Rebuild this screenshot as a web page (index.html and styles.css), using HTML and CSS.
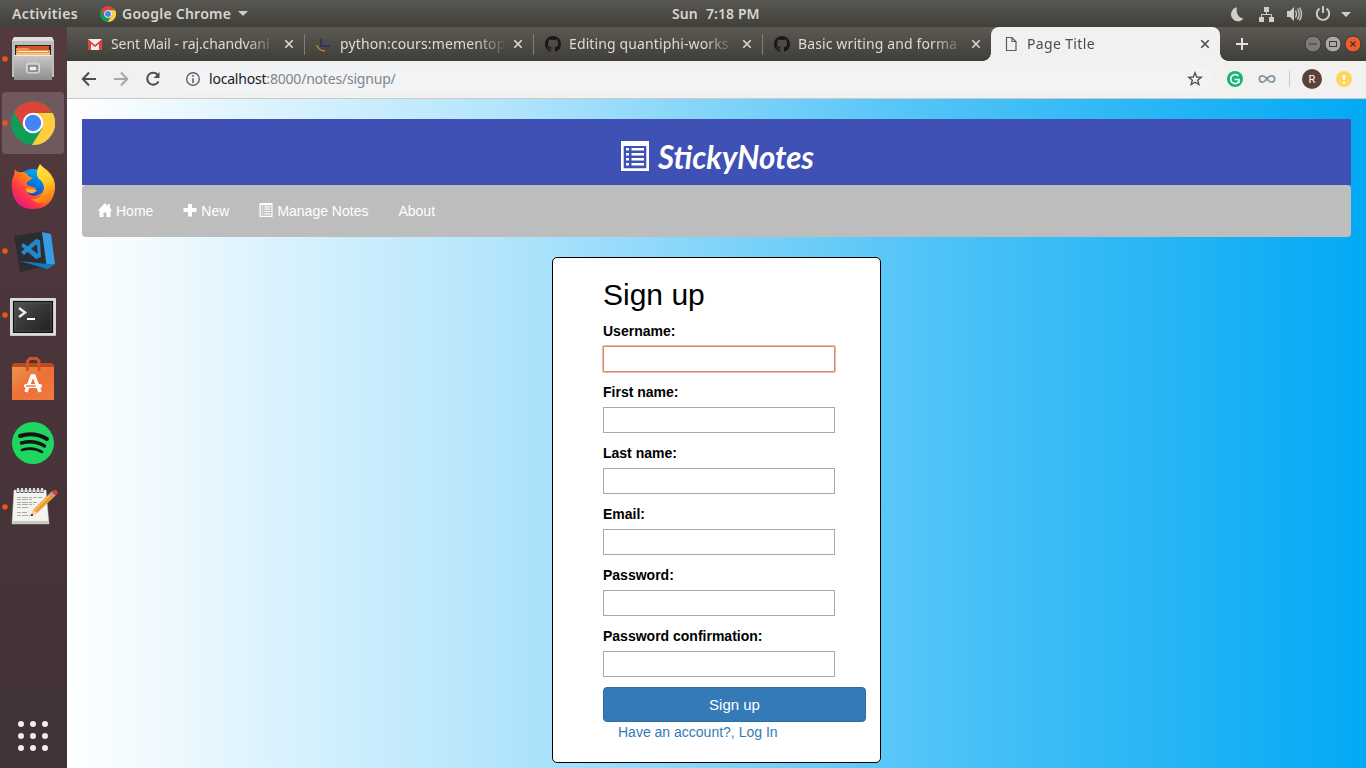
FILE: index.html
```html
<!DOCTYPE html>
<html lang="en">
<head>
<meta charset="utf-8">
<title>Page Title</title>
<link rel="stylesheet" href="styles.css">
</head>
<body>
<svg class="defs" aria-hidden="true">
  <defs>
    <symbol id="chrome" viewBox="0 0 44 44">
      <circle cx="22" cy="22" r="22" fill="#109d58"/>
      <path d="M22 22 12.5 27.5 3 11A22 22 0 0 1 41 11.5L22 12Z" fill="#db4437"/>
      <path d="M22 12H41.700A22 22 0 0 1 21 44L31.500 27Z" fill="#ffcd40"/>
      <circle cx="22" cy="22" r="10.300" fill="#fff"/><circle cx="22" cy="22" r="8.200" fill="#4285f4"/>
    </symbol>
    <symbol id="github" viewBox="0 0 16 16">
      <path fill="#1b1716" d="M8 0C3.580 0 0 3.580 0 8c0 3.540 2.290 6.530 5.470 7.590.4.070.55-.17.55-.38v-1.490c-2.010.37-2.530-.49-2.690-.94-.09-.23-.48-.94-.82-1.130-.28-.15-.68-.52-.01-.53.63-.01 1.080.58 1.230.82.72 1.210 1.870.87 2.330.66.07-.52.28-.87.51-1.070-1.780-.2-3.640-.89-3.640-3.950 0-.87.31-1.590.82-2.150-.08-.2-.36-1.020.08-2.120 0 0 .67-.21 2.200.82a7.500 7.500 0 0 1 4 0c1.530-1.040 2.200-.82 2.200-.82.44 1.100.16 1.920.08 2.120.51.56.82 1.270.82 2.150 0 3.070-1.870 3.750-3.650 3.950.29.25.54.73.54 1.480v2.200c0 .21.15.46.55.38A8 8 0 0 0 16 8c0-4.420-3.580-8-8-8Z"/>
    </symbol>
    <symbol id="close" viewBox="0 0 10 10"><path d="M1.300 1.300 8.700 8.700M8.700 1.300 1.300 8.700" stroke="currentColor" stroke-width="1.600" fill="none"/></symbol>
    <symbol id="list" viewBox="0 0 28 30">
      <path fill="currentColor" fill-rule="evenodd" d="M0 0H28V30H0ZM2.700 5V27.300H25.300V5Z"/>
      <path fill="currentColor" d="M5 7h3v2.500H5zM10.500 7H23v2.500H10.500zM5 12h3v2.500H5zM10.500 12H23v2.500H10.500zM5 17h3v2.500H5zM10.500 17H23v2.500H10.500zM5 22h3v2.500H5zM10.500 22H23v2.500H10.500z"/>
    </symbol>
    <linearGradient id="steel" x2="0" y2="1"><stop stop-color="#c9c9c9"/><stop offset="1" stop-color="#8f8f8f"/></linearGradient>
    <linearGradient id="bag" x2="1" y2="1"><stop stop-color="#e99548"/><stop offset=".5" stop-color="#ee6f35"/><stop offset="1" stop-color="#f27b45"/></linearGradient>
    <linearGradient id="fox" x1=".9" y1="0" x2=".1" y2=".9"><stop stop-color="#ffd52e"/><stop offset=".45" stop-color="#ff8a16"/><stop offset=".75" stop-color="#ff3647"/><stop offset="1" stop-color="#e31587"/></linearGradient>
    <linearGradient id="tail" x2=".3" y2="1"><stop stop-color="#fff14f"/><stop offset=".6" stop-color="#ffc928"/><stop offset="1" stop-color="#ff8012"/></linearGradient>
    <linearGradient id="globe" x1=".7" x2=".3" y2="1"><stop stop-color="#00b3f4"/><stop offset=".55" stop-color="#0867d8"/><stop offset="1" stop-color="#3a218c"/></linearGradient>
    <linearGradient id="glass" x2="1" y2="1"><stop stop-color="#555"/><stop offset=".5" stop-color="#363636"/><stop offset="1" stop-color="#202020"/></linearGradient>
  </defs>
</svg>

<header class="topbar">
  <div class="top-left">
    <span class="activities">Activities</span>
    <svg width="16" height="16"><use href="#chrome"/></svg>
    <span class="app-name">Google Chrome</span>
    <svg width="10" height="5" viewBox="0 0 10 5"><path d="M0 0H10L5 5Z" fill="#cfcdc9"/></svg>
  </div>
  <div class="clock"><span class="day">Sun</span><span>7:18 PM</span></div>
  <svg class="tray" width="124" height="26" viewBox="1230 0 124 26" fill="#d0cec9">
    <path d="M1237 6.300A7 7 0 1 0 1243.500 17.600C1238.500 17 1235.500 11.500 1237 6.300Z"/>
    <path d="M1264 6h5v5h-5zM1259 16h5v5h-5zM1269 16h5v5h-5z"/><path d="M1266.500 11v2.500M1261.500 16v-2.500h10V16" fill="none" stroke="#d0cec9"/>
    <path d="M1287 10h3l4-4v14l-4-4h-3z"/><path d="M1295.500 9.500q2 3.500 0 7M1297.500 7.500q3.500 5.500 0 11M1299.500 6.500q4 6.500 0 13" fill="none" stroke="#d0cec9" stroke-width="1.300"/>
    <path d="M1319.500 7.600A6.200 6.200 0 1 0 1326.500 7.600M1323 5v7" fill="none" stroke="#d0cec9" stroke-width="1.900"/>
    <path d="M1341 11h10l-5 5z"/>
  </svg>
</header>

<div class="desktop">
<nav class="dock">
  <svg class="app running" viewBox="0 0 67 64">
    <path d="M14 10H52L54 14V50H12V14Z" fill="#bdbdbd"/><path d="M14 10H52L54 14H12Z" fill="#dedede"/>
    <path d="M15 18H51V29H15Z" fill="#2b2522"/><path d="M17 19H49V28H17Z" fill="#cf5526"/><path d="M16 21H28L30 23H50V28H16Z" fill="#ee9249"/><path d="M18 24.500H48" stroke="#fff0d5"/><path d="M16 26H50V28H16Z" fill="#f6c275"/>
    <path d="M14 28H52V53H14Z" fill="url(#steel)"/><path d="M14 28.500H52" stroke="#e8e8e8"/>
    <rect x="26.500" y="36" width="13" height="10" rx="2" fill="#c5c5c5" stroke="#d8d8d8"/><rect x="29" y="39" width="8" height="5" fill="#eee" stroke="#555"/>
    <circle cx="5" cy="32" r="2.800" fill="#e95420"/>
  </svg>
  <svg class="app running" viewBox="0 0 67 64">
    <rect x="2" y="1" width="62" height="62" rx="4" fill="#70595c"/>
    <use href="#chrome" x="11" y="10" width="44" height="44"/>
    <circle cx="5" cy="32" r="2.800" fill="#e95420"/>
  </svg>
  <svg class="app" viewBox="0 0 67 64">
    <circle cx="33" cy="31" r="17" fill="url(#globe)"/>
    <path d="M15 14Q17 18 22 17Q27 17 28 21L33 23L27 27L27 30L36 33Q33 38 27 36Q30 43 38 40Q47 36 44 25Q38 18 40 10L47 15Q56 23 55 34Q52 54 33 54Q14 54 12 34Q11 25 14 20Z" fill="url(#fox)"/>
    <path d="M40 9Q35 17 38 23Q45 28 44 36Q40 46 31 44Q42 53 51 43Q59 30 48 17Q44 14 40 9Z" fill="url(#tail)"/>
    <path d="M26 33 37 35Q34 40 27 37Z" fill="#ffb32c"/>
  </svg>
  <svg class="app running" viewBox="0 0 67 64">
    <path d="M14 17 46 12 52 46 20 53Z" fill="#2d2d30"/>
    <path d="M42 13 51 15 55 45 47 50Z" fill="#369ce5"/><path d="M20 42 47 45 55 45 47 50Z" fill="#1279c4"/>
    <path d="M36 20 40 21 41 38 36 40 21 27 23 24 38 35ZM21 33 36 20 38 24 24 36Z" fill="#2188ce"/>
    <circle cx="5" cy="32" r="2.800" fill="#e95420"/>
  </svg>
  <svg class="app running" viewBox="0 0 67 64">
    <rect x="10" y="15" width="46" height="38" rx="1" fill="#c6c6c6"/><rect x="11" y="16" width="44" height="35" fill="none" stroke="#eee"/>
    <rect x="13.500" y="18.500" width="39" height="31" fill="url(#glass)" stroke="#111"/><path d="M15 20H51V48H15Z" fill="none" stroke="#555" stroke-width=".6"/>
    <path d="M19 25 25 29.500 19 34" fill="none" stroke="#e8e8e8" stroke-width="2.500"/><path d="M27 36H35" stroke="#fff" stroke-width="2"/>
    <circle cx="5" cy="32" r="2.800" fill="#e95420"/>
  </svg>
  <svg class="app" viewBox="0 0 67 64">
    <path d="M12 18 14 16H52L54 18V21H12Z" fill="#b84a1d"/><path d="M12 20H54V53H12Z" fill="url(#bag)"/>
    <path d="M27.500 24V14L30 11.500H36.500L39 14V24" fill="none" stroke="#cf5527" stroke-width="3"/>
    <path d="M26 45 32 29H34L40 45" fill="none" stroke="#fff" stroke-width="3.500"/><rect x="24" y="37" width="18" height="4" rx="2" fill="#fff"/><path d="M26 39H36" stroke="#ee7038" stroke-width="1.400"/>
  </svg>
  <svg class="app" viewBox="0 0 67 64">
    <circle cx="33" cy="32" r="21" fill="#1ed760"/>
    <g fill="none" stroke="#191414" stroke-linecap="round"><path d="M20 25Q34 20.500 47 28" stroke-width="4"/><path d="M21.500 32Q34 28.500 44.500 35" stroke-width="3.400"/><path d="M22 39Q33 35.500 42 41" stroke-width="2.600"/></g>
  </svg>
  <svg class="app running" viewBox="0 0 67 64">
    <path d="M14 15H46L49 49H12Z" fill="#f3f3ef" stroke="#c8c8c0" stroke-width=".5"/><path d="M13 46H48V49H12Z" fill="#c9cbc0"/>
    <g fill="none" stroke="#aaa" stroke-width="1"><path d="M17 22.500H42M17 24.500H32M17 27.500H37M17 29.500H34M17 32.500H28M17 37.500H27M17 40.500H31" stroke-dasharray="4 1 6 1 3 1"/></g>
    <path d="M18 13v5M22 13v5M26 13v5M30 13v5M34 13v5M38 13v5M42 13v5" stroke="#555" stroke-width="3"/><path d="M18 13v4M22 13v4M26 13v4M30 13v4M34 13v4M38 13v4M42 13v4" stroke="#eee" stroke-width="1.800"/>
    <path d="M31 41 33 35 49 19 53 23 37 38Z" fill="#ef9d32"/><path d="M34 36 50 20" stroke="#ffd178"/><path d="M49 19 52 16 56 20 53 23Z" fill="#aaa"/><path d="M51.500 17 54 15Q59 15 57 19L55.500 21Z" fill="#e63a3c"/><path d="M31 41 33 35 37 38Z" fill="#f5d49a"/><circle cx="32" cy="40" r="1" fill="#111"/>
    <circle cx="5" cy="32" r="2.800" fill="#e95420"/>
  </svg>
  <svg class="show-apps" viewBox="0 0 67 64" fill="#eeecec">
    <circle cx="21" cy="20" r="3"/><circle cx="33" cy="20" r="3"/><circle cx="45" cy="20" r="3"/>
    <circle cx="21" cy="32" r="3"/><circle cx="33" cy="32" r="3"/><circle cx="45" cy="32" r="3"/>
    <circle cx="21" cy="44" r="3"/><circle cx="33" cy="44" r="3"/><circle cx="45" cy="44" r="3"/>
  </svg>
</nav>

<div class="browser">
  <div class="tabs">
    <div class="tab">
      <svg class="fav" viewBox="0 0 16 16"><path d="M1 3H15V14H1Z" fill="#eee"/><path d="M1 14V3L8 9 15 3V14H12V8L8 11 4 8V14Z" fill="#db4437"/></svg>
      <span class="title">Sent Mail - raj.chandvani</span><svg class="x"><use href="#close"/></svg>
    </div>
    <div class="tab">
      <svg class="fav" viewBox="0 0 16 16" fill="none"><path d="M5 3V10H14" stroke="#343363" stroke-width="2"/><path d="M.5 9Q3 15 9 15" stroke="#c9871f" stroke-width="1.400"/></svg>
      <span class="title wide">python:cours:mementop</span><svg class="x"><use href="#close"/></svg>
    </div>
    <div class="tab">
      <svg class="fav"><use href="#github"/></svg>
      <span class="title wide">Editing quantiphi-works</span><svg class="x"><use href="#close"/></svg>
    </div>
    <div class="tab">
      <svg class="fav"><use href="#github"/></svg>
      <span class="title wide">Basic writing and forma</span><svg class="x"><use href="#close"/></svg>
    </div>
    <div class="tab active">
      <svg class="fav" viewBox="0 0 16 16"><path d="M3.500 1.500H9L13 5.500V14.500H3.500ZM9 1.500V5.500H13" fill="none" stroke="#5b5b5b" stroke-width="1.200"/></svg>
      <span class="title wider">Page Title</span><svg class="x"><use href="#close"/></svg>
    </div>
    <svg class="new-tab" viewBox="0 0 12 12"><path d="M6 0V12M0 6H12" stroke="#e5e3df" stroke-width="2"/></svg>
    <svg class="window-buttons" viewBox="0 0 58 18">
      <circle cx="9" cy="9" r="8" fill="#7d7b75" stroke="#3a3935"/><path d="M5 9H13" stroke="#3c3b37"/>
      <circle cx="29" cy="9" r="8" fill="#aaa8a3" stroke="#3a3935"/><rect x="25.500" y="6.500" width="7" height="5" fill="none" stroke="#3c3b37"/>
      <circle cx="49" cy="9" r="8" fill="#ed5c2c" stroke="#3a3935"/><path d="M46.500 6.500l5 5M51.500 6.500l-5 5" stroke="#40302a" stroke-width="1.200"/>
    </svg>
  </div>

  <div class="toolbar">
    <svg class="nav-icons" viewBox="0 0 90 20" fill="none" stroke-width="2">
      <path d="M15 10H2M8 3.500 1.800 10 8 16.500" stroke="#4c4c4c"/><path d="M33 10H46M40 3.500 46.200 10 40 16.500" stroke="#a7a6a4"/>
      <path d="M77 6A6 6 0 1 0 77.500 12.500" stroke="#4c4c4c"/><path d="M78.500 3V9H72.500Z" fill="#4c4c4c"/>
    </svg>
    <div class="omnibox">
      <svg class="info" viewBox="0 0 14 14"><circle cx="7" cy="7" r="6.300" fill="none" stroke="#5f6368" stroke-width="1.400"/><path d="M7 6.200V11M7 3V4.700" stroke="#5f6368" stroke-width="1.600"/></svg>
      <span class="url"><b>localhost</b>:8000/notes/signup/</span>
      <svg class="star" viewBox="0 0 16 16"><path d="M8 1.800 9.700 6 14.200 6.300 10.700 9.200 11.900 13.600 8 11.200 4.100 13.600 5.300 9.200 1.800 6.300 6.300 6Z" fill="none" stroke="#505357" stroke-width="1.400"/></svg>
    </div>
    <svg class="extensions" viewBox="0 0 128 22">
      <circle cx="9" cy="11" r="8" fill="#15b573"/><path d="M12.500 8A4.500 4.500 0 1 0 13 13.500M8.500 11.500H13V15" fill="none" stroke="#fff" stroke-width="1.600"/>
      <path d="M41 11C38.500 7.500 37 7.500 36 7.500A3.500 3.500 0 0 0 36 14.500C40 14.500 41 7.500 46 7.500A3.500 3.500 0 0 1 46 14.500C44 14.500 42.500 13 41 11" transform="translate(4.100 1.100) scale(.9)" fill="none" stroke="#7d99a4" stroke-width="2.100"/>
      <path d="M63.500 3V19" stroke="#c9c9c9"/>
      <circle cx="86" cy="11" r="10" fill="#5d4037"/><text class="initial" x="86" y="14.800" text-anchor="middle">R</text>
      <circle cx="118" cy="11" r="8" fill="#ffd75e"/><path d="M118 7V12M118 13.500V15.500" stroke="#fff" stroke-width="2.200"/>
    </svg>
  </div>

  <main class="page">
    <div class="brand"><svg class="brand-icon"><use href="#list"/></svg><svg class="brand-name" viewBox="0 0 160 46"><text x="1" y="30" textLength="156" lengthAdjust="spacingAndGlyphs">StickyNotes</text></svg></div>
    <nav class="menu">
      <a><svg class="glyph" viewBox="0 0 14 14"><path d="M7 0 10 3V1H12V5L14.300 7.800H12.500V14H8.500V9.500H5.500V14H1.500V7.800H-.3Z" fill="#fff"/></svg>Home</a>
      <a><svg class="glyph" viewBox="0 0 14 14"><path d="M5 1H9V5H13.500V9H9V13.500H5V9H.5V5H5Z" fill="#fff"/></svg>New</a>
      <a><svg class="glyph"><use href="#list"/></svg>Manage Notes</a>
      <a>About</a>
    </nav>
    <form class="card">
      <h2>Sign up</h2>
      <label for="u">Username:</label><input id="u" class="focused">
      <label for="f">First name:</label><input id="f">
      <label for="l">Last name:</label><input id="l">
      <label for="e">Email:</label><input id="e">
      <label for="p">Password:</label><input id="p" type="password">
      <label for="c">Password confirmation:</label><input id="c" type="password">
      <button type="button">Sign up</button>
      <a class="login">Have an account?, Log In</a>
    </form>
  </main>
</div>
</div>
</body>
</html>
```
FILE: styles.css
```css
* { box-sizing: border-box; }
body { margin: 0; width: 1366px; height: 768px; overflow: hidden; font: 14px/20px "Liberation Sans", Arial, sans-serif; }
svg { display: block; flex: none; }
.defs { position: absolute; width: 0; height: 0; }

.topbar { height: 27px; display: grid; grid-template-columns: 660px auto 1fr; align-items: center; padding: 0 12px; background: linear-gradient(#595751, #403f3a); color: #d8d5ce; font: 600 14px/26px "Noto Sans", sans-serif; }
.top-left { display: flex; align-items: center; }
.activities { width: 88px; letter-spacing: .35px; }
.app-name { width: 110px; margin: 0 6px; letter-spacing: .25px; white-space: nowrap; }
.clock { display: flex; gap: 8px; letter-spacing: .1px; }
.tray { justify-self: end; }

.desktop { display: flex; height: 741px; }
.dock { width: 67px; display: flex; flex-direction: column; background: linear-gradient(#533a3e, #49343a 50%, #403236); }
.app, .show-apps { width: 67px; height: 64px; }
.show-apps { margin-top: auto; }
.browser { flex: 1; min-width: 0; display: flex; flex-direction: column; }

.tabs { height: 34px; display: flex; align-items: center; padding: 0 5px 0 8px; background: linear-gradient(#5b5952, #3f3e39); color: #dedbd4; font: 14px/34px "Noto Sans", sans-serif; }
.tab { position: relative; width: 229px; height: 34px; padding-left: 12px; display: flex; align-items: center; }
.tab:nth-child(-n+3)::after { content: ""; position: absolute; right: -1px; top: 7px; width: 1px; height: 21px; background: #817e77; }
.fav { width: 16px; height: 16px; margin-right: 8px; }
.title { width: 167px; white-space: nowrap; letter-spacing: -.1px; -webkit-mask-image: linear-gradient(90deg, #000 135px, transparent 167px); mask-image: linear-gradient(90deg, #000 135px, transparent 167px); }
.wide { letter-spacing: .12px; }
.wider { letter-spacing: .35px; }
.x { width: 10px; height: 10px; margin-left: 6px; }
.active { background: #f2f1f0; color: #4c4c4c; border-radius: 8px 8px 0 0; }
.active::before, .active::after { content: ""; position: absolute; bottom: 0; width: 8px; height: 8px; }
.active::before { left: -8px; background: radial-gradient(circle at 0 0, transparent 7.500px, #f2f1f0 8px); }
.active::after { right: -8px; background: radial-gradient(circle at 100% 0, transparent 7.500px, #f2f1f0 8px); }
.new-tab { width: 12px; height: 12px; margin-left: 16px; }
.window-buttons { width: 58px; height: 18px; margin-left: auto; margin-right: -1px; }

.toolbar { height: 38px; display: flex; align-items: center; padding: 0 12px 2px 14px; background: #f2f1f0; border-bottom: 1px solid #cbcac9; }
.nav-icons { width: 90px; height: 20px; }
.omnibox { width: 1037px; height: 28px; margin-left: 4px; margin-right: 15px; padding: 0 8px 0 11px; display: flex; align-items: center; background: #f1f3f4; border-radius: 14px; }
.info { width: 14px; height: 14px; margin-right: 9px; }
.url { font: 14px/28px "Noto Sans", sans-serif; letter-spacing: -.2px; color: #80868b; }
.url b { font-weight: normal; color: #202124; }
.star { width: 16px; height: 16px; margin-left: auto; }
.extensions { width: 128px; height: 22px; }
.initial { font: 11px Roboto, sans-serif; fill: #fff; }

.page { flex: 1; padding: 20px 15px 0; background: linear-gradient(90deg, #fff, #b3e5fc, #4fc3f7, #03a9f4); }
.brand { height: 66px; display: flex; justify-content: center; gap: 8px; background: #3f51b5; }
.brand-icon { width: 28px; height: 30px; margin-top: 22px; color: #fff; }
.brand-name { width: 160px; height: 46px; margin: 20px -5px 0 0; overflow: visible; font: italic bold 33px Lato, cursive; fill: #fff; }
.menu { height: 52px; margin-bottom: 20px; padding: 0 1px; display: flex; align-items: center; background: #bdbdbd; border-radius: 4px; color: #fff; }
.menu a { display: flex; align-items: center; padding: 0 15px; }
.glyph { width: 14px; height: 14px; margin: -2px 4px 0 0; color: #fff; overflow: visible; }

.card { width: 329px; height: 506px; margin: 0 auto; padding: 20px 14px 20px 50px; background: #fff; border: 1px solid #000; border-radius: 5px; color: #000; }
h2 { margin: 0 0 10px; font-size: 30px; line-height: 33px; font-weight: normal; }
label { display: block; margin-bottom: 5px; font-weight: bold; }
input { display: block; width: 232px; height: 26px; margin: 0 0 10px; border: 1px solid #a9a9a9; background: #fff; outline: 0; }
.focused { border-color: #d08a76; box-shadow: 0 0 0 1px #f4b8a4; border-radius: 1px; }
button { display: block; width: 263px; height: 35px; padding: 0; background: #337ab7; border: 1px solid #2e6da4; border-radius: 4px; color: #fff; font: 15px/20px "Liberation Sans", Arial, sans-serif; }
.login { display: block; padding-left: 15px; color: #337ab7; }
```
